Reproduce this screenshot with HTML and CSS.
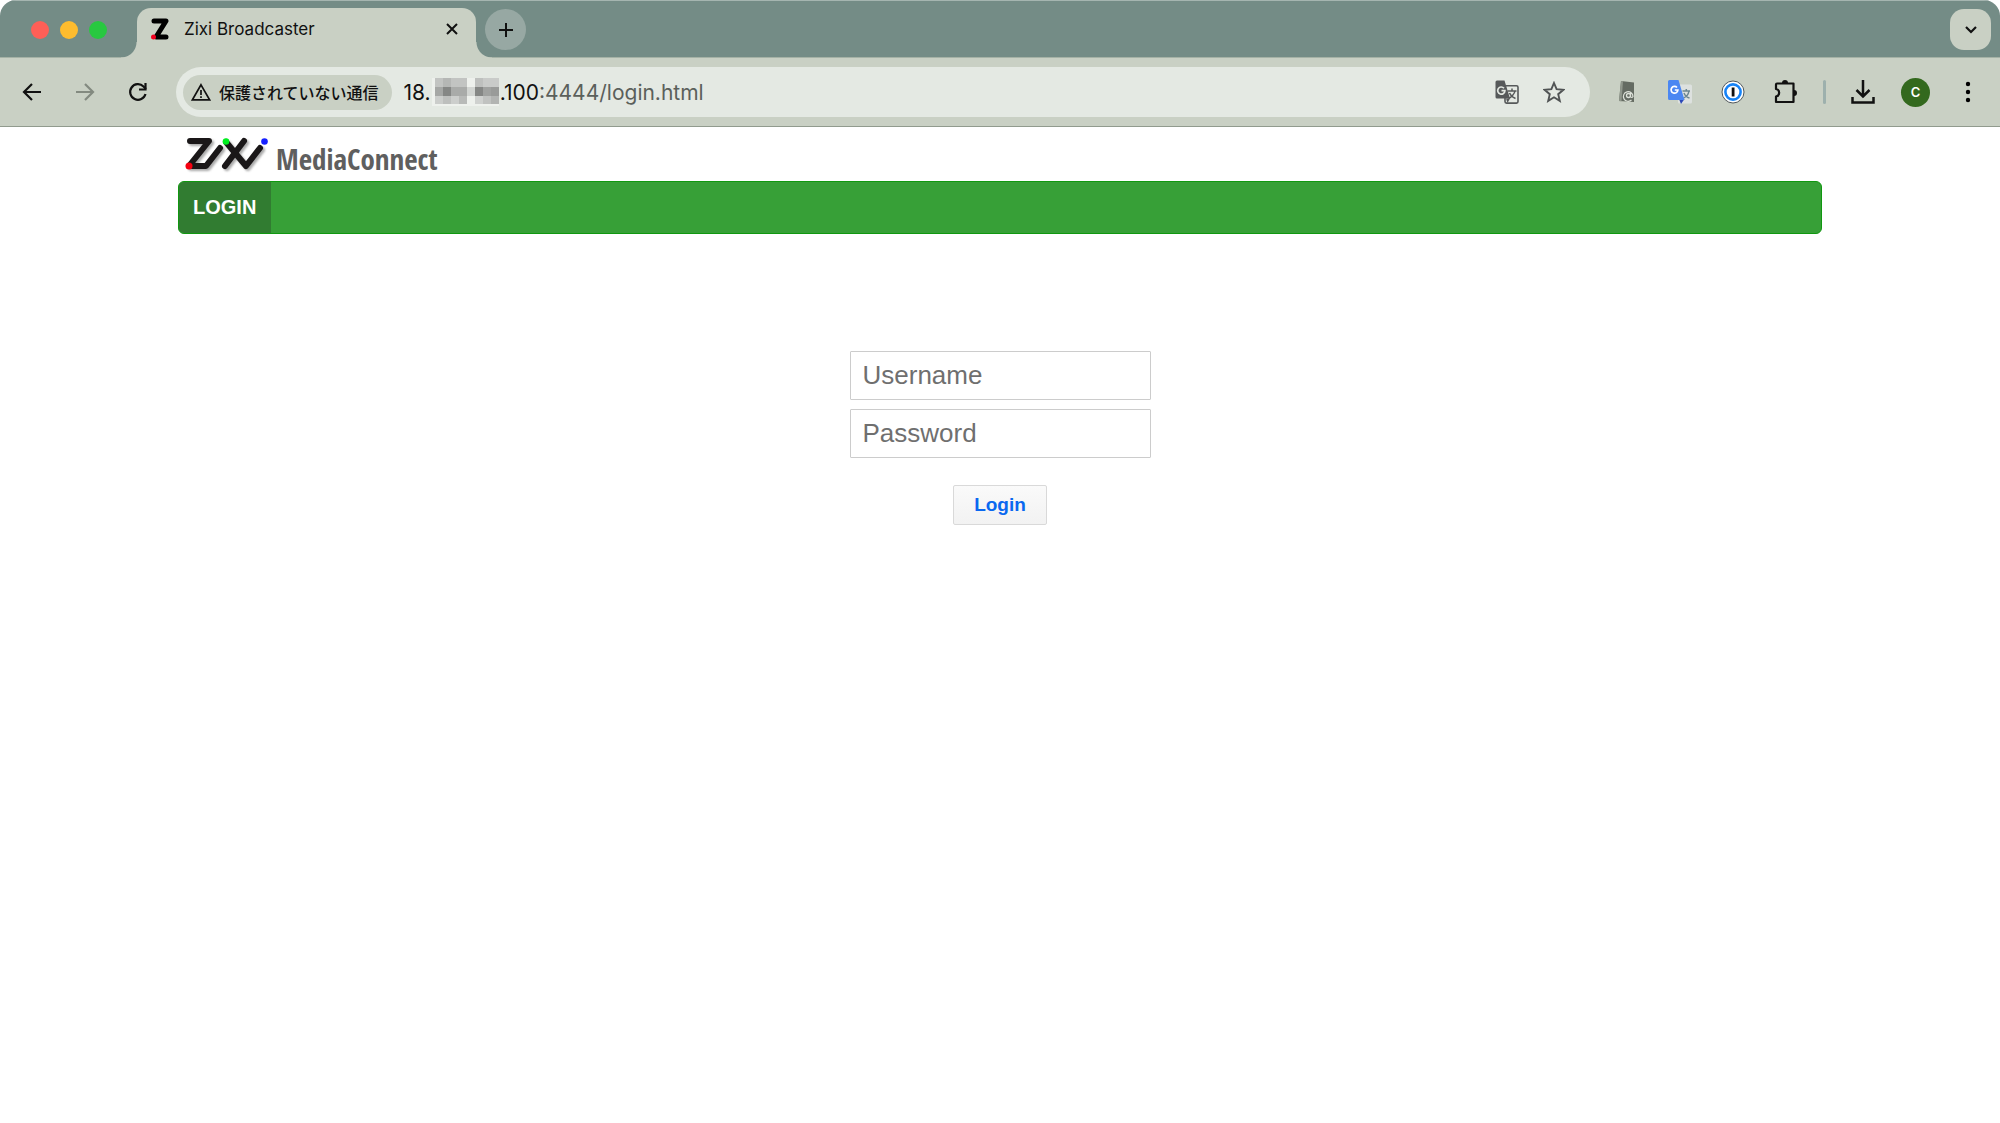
FILE: index.html
```html
<!DOCTYPE html>
<html lang="ja">
<head>
    <meta charset="UTF-8">
    <title>Zixi Broadcaster</title>
    <link rel="stylesheet" href="styles.css">
</head>
<body>

<header class="browser">
    <div class="tab-strip">
        <div class="lights">
            <span class="light red"></span>
            <span class="light yellow"></span>
            <span class="light green"></span>
        </div>
        <div class="tab">
            <svg class="favicon" width="18" height="22" viewBox="0 0 18 22">
                <path d="M3 3H15L5 19H15" fill="none" stroke="#000" stroke-width="5" stroke-linecap="round" stroke-linejoin="round"/>
                <circle cx="2.5" cy="19" r="2.5" fill="#f00020"/>
            </svg>
            <span class="tab-title">Zixi Broadcaster</span>
            <button class="icon-button" aria-label="Close tab">
                <svg width="12" height="12" viewBox="0 0 12 12"><path d="M1 1L11 11M11 1L1 11" fill="none" stroke="#111" stroke-width="2"/></svg>
            </button>
        </div>
        <button class="new-tab" aria-label="New tab">
            <svg width="16" height="16" viewBox="0 0 16 16"><path d="M8 1V15M1 8H15" fill="none" stroke="#111" stroke-width="2"/></svg>
        </button>
        <button class="tab-search" aria-label="Search tabs">
            <svg width="12" height="8" viewBox="0 0 12 8"><path d="M1 1L6 6L11 1" fill="none" stroke="#111" stroke-width="2.2"/></svg>
        </button>
    </div>

    <div class="toolbar">
        <div class="nav-buttons">
            <button class="icon-button" aria-label="Back">
                <svg width="20" height="20" viewBox="0 0 20 20"><path d="M19 10H2.500M10 2L2 10L10 18" fill="none" stroke="#111" stroke-width="2.200"/></svg>
            </button>
            <button class="icon-button" aria-label="Forward">
                <svg width="20" height="20" viewBox="0 0 20 20"><path d="M1 10H17.500M10 2L18 10L10 18" fill="none" stroke="#838a80" stroke-width="2.200"/></svg>
            </button>
            <button class="icon-button" aria-label="Reload">
                <svg width="20" height="20" viewBox="0 0 20 20"><path d="M17.500 12A7.800 7.800 0 1 1 15.500 4.500L18 7" fill="none" stroke="#111" stroke-width="2.200"/><path d="M17.500 1V7.500H11" fill="none" stroke="#111" stroke-width="2.200"/></svg>
            </button>
        </div>

        <div class="address-bar">
            <button class="site-info">
                <svg width="20" height="18" viewBox="0 0 20 18"><path d="M10 1.800L18.600 16.800H1.400Z" fill="none" stroke="#111" stroke-width="1.700"/><path d="M10 7V12M10 13.300V15" stroke="#111" stroke-width="1.700"/></svg>
                <span>保護されていない通信</span>
            </button>
            <div class="url">
                <span class="host">18.</span>
                <svg class="mosaic" width="67" height="28" viewBox="0 0 67 28">
                    <rect width="67" height="28" fill="#eef1ed"/>
                    <rect x="3" y="0" width="32" height="9" fill="#c2c4c2"/>
                    <rect x="11" y="0" width="8" height="9" fill="#b5b7b5"/>
                    <rect x="3" y="9" width="8" height="9" fill="#a5a7a5"/>
                    <rect x="11" y="9" width="8" height="9" fill="#858785"/>
                    <rect x="19" y="9" width="16" height="9" fill="#a9aba9"/>
                    <rect x="3" y="18" width="8" height="8" fill="#cbcdcb"/>
                    <rect x="11" y="18" width="8" height="8" fill="#bdbfbd"/>
                    <rect x="19" y="18" width="8" height="8" fill="#cccecc"/>
                    <rect x="27" y="18" width="8" height="8" fill="#b8bab8"/>
                    <rect x="35" y="9" width="8" height="9" fill="#d2d5d2"/>
                    <rect x="43" y="0" width="8" height="9" fill="#bec0be"/>
                    <rect x="51" y="0" width="16" height="9" fill="#c9cbc9"/>
                    <rect x="43" y="9" width="8" height="9" fill="#858785"/>
                    <rect x="51" y="9" width="8" height="9" fill="#a0a2a0"/>
                    <rect x="59" y="9" width="8" height="9" fill="#999b99"/>
                    <rect x="43" y="18" width="8" height="8" fill="#cfd1cf"/>
                    <rect x="51" y="18" width="8" height="8" fill="#c0c2c0"/>
                    <rect x="59" y="18" width="8" height="8" fill="#b2b4b2"/>
                </svg>
                <span class="host">.100</span><span class="path">:4444/login.html</span>
            </div>
            <button class="icon-button" aria-label="Translate">
                <svg width="24" height="24" viewBox="0 0 24 24">
                    <rect x="10" y="5.700" width="13" height="17.400" rx="1.500" fill="none" stroke="#56595a" stroke-width="1.600"/>
                    <path d="M12.500 11H21.500M17 8.500V11M20 11C19.500 14 16 17.500 13.500 18.500M14.500 13C15.500 15.500 18 17.500 20.500 18.500" fill="none" stroke="#56595a" stroke-width="1.500"/>
                    <path d="M2 0.500H9.500L15 18.500H2A1.500 1.500 0 0 1 .5 17V2A1.500 1.500 0 0 1 2 .5Z" fill="#56595a"/>
                    <path d="M11 18.500H15L12.500 23Z" fill="#56595a"/>
                    <path d="M9 8.200A3.600 3.600 0 1 0 9.900 10.700H6.500" fill="none" stroke="#e4e9e3" stroke-width="1.700"/>
                </svg>
            </button>
            <button class="icon-button" aria-label="Bookmark">
                <svg width="22" height="22" viewBox="0 0 22 22"><path d="M11 2L13.600 8.200L20.400 8.800L15.200 13.200L16.800 19.900L11 16.300L5.200 19.900L6.800 13.200L1.600 8.800L8.400 8.200Z" fill="none" stroke="#505354" stroke-width="1.900"/></svg>
            </button>
        </div>

        <div class="extensions">
            <button class="icon-button" aria-label="Mail extension">
                <svg width="24" height="24" viewBox="0 0 24 24">
                    <path d="M6 1L19 2.500V22L4 21Z" fill="#646b62"/>
                    <path d="M6 1L4 21L6.500 21.200L8 1.300Z" fill="#90978c"/>
                    <circle cx="13.500" cy="15.500" r="2" fill="none" stroke="#dce1d8" stroke-width="1.300"/>
                    <path d="M15.500 13V16.500Q16.800 18.500 18 16.500A4.800 4.800 0 1 0 16.500 20" fill="none" stroke="#dce1d8" stroke-width="1.200"/>
                </svg>
            </button>
            <button class="icon-button" aria-label="Google Translate">
                <svg width="24" height="24" viewBox="0 0 24 24">
                    <rect x="10" y="4.500" width="14" height="19" rx="1.500" fill="#dde1df"/>
                    <path d="M14.500 11H22M18.300 9V11M21 11C20.500 14 18 17 15.500 18M16 13C17 15.500 19.500 17.500 21.500 18" fill="none" stroke="#6c8791" stroke-width="1.500"/>
                    <path d="M11 19H16.500L13 24Z" fill="#2c49b8"/>
                    <path d="M1.500 0H10.500L16.500 20H1.500A1.500 1.500 0 0 1 0 18.500V1.500A1.500 1.500 0 0 1 1.500 0Z" fill="#4b87f2"/>
                    <path d="M9 7.500A3.400 3.400 0 1 0 9.900 10H6.800" fill="none" stroke="#fff" stroke-width="1.700"/>
                </svg>
            </button>
            <button class="icon-button" aria-label="1Password">
                <svg width="24" height="24" viewBox="0 0 24 24">
                    <circle cx="12" cy="12" r="11" fill="#fff" stroke="#50575b" stroke-width="1"/>
                    <circle cx="12" cy="12" r="7.600" fill="#fff" stroke="#1683f7" stroke-width="2.600"/>
                    <rect x="10.700" y="7.500" width="2.800" height="9" fill="#111"/>
                </svg>
            </button>
            <button class="icon-button" aria-label="Extensions">
                <svg width="24" height="24" viewBox="0 0 24 24">
                    <path d="M3 3.500H19.500V22H2V16.500A3.800 3.800 0 0 0 2 9V4.500Q2 3.500 3 3.500Z" fill="none" stroke="#111" stroke-width="2.200" stroke-linejoin="round"/>
                    <path d="M8 3A3 3 0 0 1 14 3ZM20 10A3 3 0 0 1 20 16Z" fill="#111"/>
                </svg>
            </button>
        </div>
        <span class="divider"></span>
        <div class="profile">
            <button class="icon-button" aria-label="Downloads">
                <svg width="24" height="24" viewBox="0 0 24 24"><path d="M12 0V16M5.500 10L12 16.500L18.500 10M1.500 17V22.500H22.500V17" fill="none" stroke="#111" stroke-width="2.500"/></svg>
            </button>
            <button class="avatar">C</button>
            <button class="icon-button" aria-label="Menu">
                <svg width="24" height="24" viewBox="0 0 24 24"><circle cx="12" cy="4" r="2.200"/><circle cx="12" cy="12" r="2.200"/><circle cx="12" cy="20" r="2.200"/></svg>
            </button>
        </div>
    </div>
</header>

<main class="page">
    <div class="brand">
        <svg class="logo" width="88" height="38" viewBox="0 0 88 38">
            <g fill="none" stroke-width="6" stroke-linecap="round" stroke-linejoin="round">
                <path class="logo-shadow" d="M7 6H26L6 31H23L37 13M61 6L42 31M43 7L63 31L77 13" transform="translate(1 1)"/>
                <path stroke="#1a1718" d="M6 5H25L5 30H22L36 12M60 5L41 30M42 6L62 30L76 12"/>
            </g>
            <circle cx="5" cy="30" r="3.500" fill="#f50010"/>
            <circle cx="42" cy="5.500" r="3.300" fill="#00f020"/>
            <circle cx="80.500" cy="5.500" r="3.300" fill="#1620ff"/>
        </svg>
        <span class="brand-name">MediaConnect</span>
    </div>

    <nav class="menu">
        <a href="/login.html" class="menu-item">LOGIN</a>
    </nav>

    <form class="login-form">
        <input type="text" class="field" placeholder="Username" aria-label="Username">
        <input type="password" class="field" placeholder="Password" aria-label="Password">
        <button type="submit" class="login-button">Login</button>
    </form>
</main>

</body>
</html>
```

FILE: styles.css
```css
* {
    box-sizing: border-box;
}
body {
    margin: 0;
    background: #fff;
    font-family: "Liberation Sans", Arial, sans-serif;
}
button {
    padding: 0;
    border: 0;
    background: none;
    font-family: inherit;
    color: inherit;
}
svg {
    display: block;
    flex: none;
}

/* browser window */
.browser {
    border-radius: 16px 16px 0 0;
    overflow: hidden;
    border-bottom: 1px solid #919b8e;
    font-family: Inter, "Noto Sans CJK JP", sans-serif;
    color: #111;
}
.tab-strip {
    display: flex;
    align-items: flex-end;
    height: 58px;
    padding: 0 9px 0 31px;
    background: #748c86;
    border-top: 1px solid #a5b5b0;
    border-bottom: 1px solid #a5b2a6;
}
.lights {
    display: flex;
    gap: 11px;
    width: 106px;
    padding-bottom: 18px;
}
.light {
    width: 18px;
    height: 18px;
    border-radius: 50%;
}
.red {
    background: #ff5f57;
}
.yellow {
    background: #febc2e;
}
.green {
    background: #28c840;
}
.tab {
    position: relative;
    display: flex;
    align-items: center;
    width: 339px;
    height: 50px;
    margin-bottom: -1px;
    padding: 0 18px 8px 14px;
    background: #c9d0c4;
    border-radius: 14px 14px 0 0;
}
.tab::before,
.tab::after {
    content: "";
    position: absolute;
    bottom: 0;
    width: 16px;
    height: 16px;
}
.tab::before {
    right: 100%;
    background: radial-gradient(circle at 0 0, transparent 15px, #c9d0c4 16px);
}
.tab::after {
    left: 100%;
    background: radial-gradient(circle at 100% 0, transparent 15px, #c9d0c4 16px);
}
.tab-title {
    flex: 1;
    margin-left: 15px;
    font-size: 17px;
}
.icon-button {
    display: flex;
    align-items: center;
    justify-content: center;
}
.new-tab,
.tab-search {
    display: flex;
    align-items: center;
    justify-content: center;
    width: 41px;
    height: 41px;
    margin-bottom: 7px;
}
.new-tab {
    margin-left: 9px;
    background: #97a8a3;
    border-radius: 50%;
}
.tab-search {
    margin-left: auto;
    background: #c9d0c4;
    border-radius: 14px;
}
.toolbar {
    display: flex;
    align-items: center;
    height: 68px;
    padding: 0 20px 0 22px;
    background: #c9d0c4;
}
.nav-buttons {
    display: flex;
    gap: 33px;
    margin-right: 28px;
}
.address-bar {
    flex: 1;
    display: flex;
    align-items: center;
    gap: 24px;
    height: 50px;
    padding: 0 25px 0 7px;
    background: #e4e9e3;
    border-radius: 25px;
}
.site-info {
    display: flex;
    align-items: center;
    gap: 8px;
    height: 35px;
    padding: 0 13px 0 8px;
    background: #c9d0c4;
    border-radius: 18px;
    font-family: "Noto Sans CJK JP", sans-serif;
    font-size: 16px;
    font-weight: 500;
}
.url {
    flex: 1;
    display: flex;
    align-items: center;
    margin-left: -12px;
    font-size: 21px;
}
.mosaic {
    margin: 0 1px;
}
.path {
    color: #5b605b;
}
.extensions,
.profile {
    display: flex;
    align-items: center;
}
.extensions {
    gap: 29px;
    margin-left: 25px;
}
.profile {
    gap: 26px;
}
.divider {
    width: 3px;
    height: 24px;
    margin: 0 25px;
    background: #9db0ad;
    border-radius: 2px;
}
.avatar {
    width: 29px;
    height: 29px;
    border-radius: 50%;
    background: #33691e;
    color: #fff;
    font-size: 13px;
    font-weight: 600;
}

/* login page */
.page {
    padding: 6px 178px 0;
}
.brand {
    display: flex;
    align-items: center;
    height: 48px;
    padding-left: 6px;
}
.logo {
    margin-bottom: 4px;
}
.logo-shadow {
    stroke: #aaa;
    filter: blur(1px);
}
.brand-name {
    margin-left: 4px;
    font-family: "Open Sans Condensed", "Liberation Sans Narrow", "Open Sans", sans-serif;
    font-size: 29px;
    font-weight: 700;
    line-height: 36px;
    padding-top: 4px;
    color: #5f5f5f;
}
.menu {
    display: flex;
    height: 53px;
    background: #37a037;
    border: 1px solid #109810;
    border-radius: 6px;
    overflow: hidden;
}
.menu-item {
    display: flex;
    align-items: center;
    padding: 0 15px 0 14px;
    background: #317c31;
    color: #fff;
    font-size: 20px;
    font-weight: bold;
    text-decoration: none;
}
.login-form {
    display: flex;
    flex-direction: column;
    align-items: center;
    gap: 9px;
    padding-top: 117px;
}
.field {
    width: 301px;
    height: 49px;
    padding: 0 12px;
    border: 1px solid #ccc;
    border-radius: 1px;
    background: #fff;
    font-family: inherit;
    font-size: 26px;
}
.field::placeholder {
    color: #6f6f6f;
}
.login-button {
    height: 40px;
    margin-top: 18px;
    padding: 0 20px;
    border: 1px solid #d9d9d9;
    border-radius: 2px;
    background: linear-gradient(#fafafa, #f2f2f2);
    color: #0a68f0;
    font-size: 19px;
    font-weight: bold;
}
```
